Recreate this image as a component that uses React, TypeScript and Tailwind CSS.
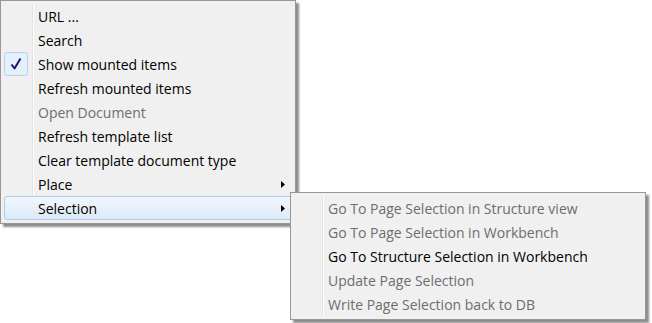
import React from 'react';

interface MenuItem {
  label: string;
  disabled?: boolean;
  checked?: boolean;
  submenu?: boolean;
  active?: boolean;
}

const mainItems: MenuItem[] = [
  { label: 'URL ...' },
  { label: 'Search' },
  { label: 'Show mounted items', checked: true },
  { label: 'Refresh mounted items' },
  { label: 'Open Document', disabled: true },
  { label: 'Refresh template list' },
  { label: 'Clear template document type' },
  { label: 'Place', submenu: true },
  { label: 'Selection', submenu: true, active: true },
];

const subItems: MenuItem[] = [
  { label: 'Go To Page Selection in Structure view', disabled: true },
  { label: 'Go To Page Selection in Workbench', disabled: true },
  { label: 'Go To Structure Selection in Workbench' },
  { label: 'Update Page Selection', disabled: true },
  { label: 'Write Page Selection back to DB', disabled: true },
];

function Arrow() {
  return (
    <svg width="4" height="7" viewBox="0 0 4 7" className="shrink-0">
      <path d="M0 0 L4 3.5 L0 7 Z" fill="#000" />
    </svg>
  );
}

// checked state: small framed box in the icon gutter
function Check() {
  return (
    <div className="w-[24px] h-[24px] rounded-[3px] border border-[#aecff7] bg-[#e6f0fa] flex items-center justify-center">
      <svg width="14" height="14" viewBox="0 0 14 14">
        <path d="M2.5 7.5 L5.5 11.5 L11.5 1.5" fill="none" stroke="#15157a" strokeWidth="2" strokeLinejoin="round" />
      </svg>
    </div>
  );
}

function Row({ item }: { item: MenuItem }) {
  const highlight = item.active
    ? 'rounded-[3px] border border-[#a8cdf0] bg-gradient-to-b from-[#f1f7fd] to-[#dde9f7]'
    : 'border border-transparent';
  return (
    <div className={`relative h-[24px] ml-[3px] mr-[1px] flex items-center ${highlight}`}>
      <div className="w-[24px] -ml-px flex items-center justify-center">{item.checked && <Check />}</div>
      <span
        className={`pl-[10px] flex-1 whitespace-nowrap ${item.disabled ? 'text-[#6d6d6d]' : 'text-black'}`}
      >
        {item.label}
      </span>
      {item.submenu && (
        <span className="pr-[8px] flex items-center">
          <Arrow />
        </span>
      )}
    </div>
  );
}

function Menu({ items, className }: { items: MenuItem[]; className: string }) {
  return (
    <div
      className={`absolute bg-[#f0f0f0] border border-[#979797] py-[3px] shadow-[3px_3px_2px_rgba(0,0,0,0.45)] ${className}`}
    >
      {/* gutter separator */}
      <div className="absolute left-[31px] top-[3px] bottom-[3px] w-[2px] border-l border-[#e2e3e3] bg-white" />
      {items.map((item, i) => (
        <Row key={i} item={item} />
      ))}
    </div>
  );
}

export default function App() {
  return (
    <div
      className="relative w-[652px] h-[323px] bg-white text-[14px] overflow-hidden"
      style={{ fontFamily: '"Open Sans", "Noto Sans", sans-serif' }}
    >
      <Menu items={mainItems} className="left-0 top-0 w-[296px]" />
      <Menu items={subItems} className="left-[290px] top-[192px] w-[356px]" />
    </div>
  );
}
